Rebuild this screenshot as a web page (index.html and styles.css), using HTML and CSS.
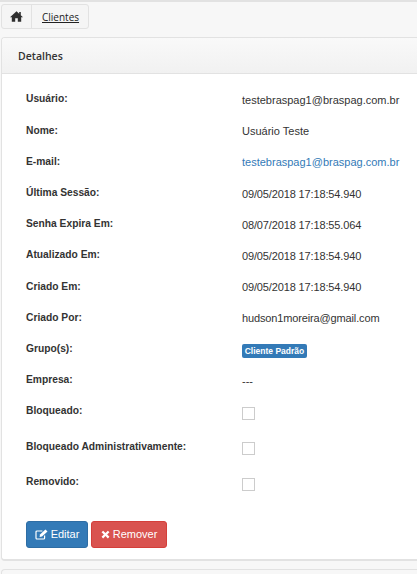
FILE: index.html
```
<!DOCTYPE html>
<html lang="pt-BR">
<head>
<meta charset="utf-8">
<title>Detalhes</title>
<link rel="stylesheet" href="styles.css">
</head>
<body>
<nav class="crumbs">
  <a class="crumb crumb-home" href="#" aria-label="Início">
    <svg class="home-icon" viewBox="0 0 13 11" width="13" height="11"><path d="M6.5 0.3 L9.2 2.8 V1 H10.8 V4.3 L13 6.3 H11.2 V10.8 H7.8 V7.3 H5.2 V10.8 H1.8 V6.3 H0 Z" fill="#2f2f2f"/></svg>
  </a>
  <a class="crumb crumb-link" href="#">Clientes</a>
</nav>
<section class="panel">
  <header class="panel-head">Detalhes</header>
  <div class="panel-body">
    <dl class="details">
      <div class="row"><dt>Usuário:</dt><dd>testebraspag1@braspag.com.br</dd></div>
      <div class="row"><dt>Nome:</dt><dd>Usuário Teste</dd></div>
      <div class="row"><dt>E-mail:</dt><dd><a class="mail" href="#">testebraspag1@braspag.com.br</a></dd></div>
      <div class="row"><dt>Última Sessão:</dt><dd class="tight">09/05/2018 17:18:54.940</dd></div>
      <div class="row"><dt>Senha Expira Em:</dt><dd class="tight">08/07/2018 17:18:55.064</dd></div>
      <div class="row"><dt>Atualizado Em:</dt><dd class="tight">09/05/2018 17:18:54.940</dd></div>
      <div class="row"><dt>Criado Em:</dt><dd class="tight">09/05/2018 17:18:54.940</dd></div>
      <div class="row"><dt>Criado Por:</dt><dd class="tight">hudson1moreira@gmail.com</dd></div>
      <div class="row"><dt>Grupo(s):</dt><dd><span class="tag">Cliente Padrão</span></dd></div>
      <div class="row"><dt>Empresa:</dt><dd>---</dd></div>
      <div class="row row-check"><dt>Bloqueado:</dt><dd><span class="check"></span></dd></div>
      <div class="row row-check"><dt>Bloqueado Administrativamente:</dt><dd><span class="check"></span></dd></div>
      <div class="row row-check"><dt>Removido:</dt><dd><span class="check"></span></dd></div>
    </dl>
    <div class="actions">
      <button class="btn btn-blue" type="button">
        <svg viewBox="0 0 13 11" width="13" height="11"><path d="M9.6 6.4 V9 A1 1 0 0 1 8.6 10 H2 A1 1 0 0 1 1 9 V3 A1 1 0 0 1 2 2 H7.4" fill="none" stroke="#fff" stroke-width="1.2"/><path d="M4.6 7.9 L5 5.6 L10.4 0.5 L12.5 2.6 L7 7.6 Z" fill="#fff"/></svg>
        Editar
      </button>
      <button class="btn btn-red" type="button">
        <svg viewBox="0 0 10 10" width="9" height="9"><path d="M2.4 0.7 L5 3.2 L7.6 0.7 L9.4 2.5 L6.8 5 L9.4 7.6 L7.6 9.4 L5 6.8 L2.4 9.4 L0.6 7.6 L3.2 5 L0.6 2.5 Z" fill="#fff"/></svg>
        Remover
      </button>
    </div>
  </div>
</section>
<div class="panel-next"></div>
</body>
</html>
```

FILE: styles.css
```
* { box-sizing: border-box; }
html, body { height: 100%; }
body {
  margin: 0;
  height: 574px;
  overflow: hidden;
  background: #f7f7f7;
  border-top: 2px solid #e2e2e2;
  padding: 2px 0 0 1px;
  font-family: "Liberation Sans", Arial, sans-serif;
  font-size: 11px;
  color: #333;
}
.crumbs {
  display: inline-flex;
  height: 25px;
  border: 1px solid #e2e2e2;
  border-radius: 3px;
  background: #f5f5f5;
  vertical-align: top;
}
.crumb { display: flex; align-items: center; color: #222; }
.crumb-home { width: 30px; justify-content: center; border-right: 1px solid #e2e2e2; }
.crumb-link {
  padding: 0 9px 0 10px;
  font-family: "Open Sans", sans-serif;
  font-size: 10px;
  text-decoration: underline;
}
.panel {
  margin-top: 8px;
  height: 524px;
  background: #fff;
  border: 1px solid #e2e2e2;
  border-right: 0;
  border-bottom-width: 2px;
  border-radius: 4px 0 0 4px;
  overflow: hidden;
}
.panel-head {
  height: 36px;
  padding: 0 16px;
  display: flex;
  align-items: center;
  background: linear-gradient(#f9f9f9, #f1f1f1);
  border-bottom: 1px solid #e2e2e2;
  font-family: "Open Sans", sans-serif;
  font-size: 10.5px;
  font-weight: 600;
  color: #333;
}
.panel-body { padding: 17px 0 0 24px; }
.details { margin: 0; }
.row {
  display: grid;
  grid-template-columns: 216px 1fr;
  height: 31.2px;
  align-items: start;
  line-height: 16px;
}
.row-check { height: 35.5px; }
dt { padding-top: 0.4px; font-weight: 700; font-size: 10.25px; color: #333; }
dd { margin: 0; padding-top: 1px; font-size: 11px; color: #333; }
.tight { letter-spacing: -0.14px; }
.mail { color: #337ab7; text-decoration: none; }
.tag {
  display: block;
  width: 65px;
  height: 14px;
  margin-top: 2.4px;
  line-height: 14px;
  background: #337ab7;
  color: #fff;
  border-radius: 2px;
  font-size: 8.5px;
  font-weight: 700;
  text-align: center;
}
.check {
  display: block;
  width: 13px;
  height: 13px;
  border: 1px solid #ccc;
  background: #fff;
  margin-top: 3px;
}
.actions { display: flex; gap: 3px; margin-top: 11.5px; }
.btn {
  height: 27px;
  padding: 0;
  display: flex;
  align-items: center;
  justify-content: center;
  gap: 3px;
  border-radius: 3px;
  border: 1px solid;
  color: #fff;
  font-family: "Liberation Sans", Arial, sans-serif;
  font-size: 11px;
}
.btn-blue { width: 62px; background: #337ab7; border-color: #2e6da4; }
.btn-red { width: 76px; background: #d9534f; border-color: #d43f3a; }
.panel-next {
  margin-top: 8px;
  height: 10px;
  border-top: 1px solid #e2e2e2;
  border-left: 1px solid #e2e2e2;
  border-radius: 4px 0 0 0;
}
```
